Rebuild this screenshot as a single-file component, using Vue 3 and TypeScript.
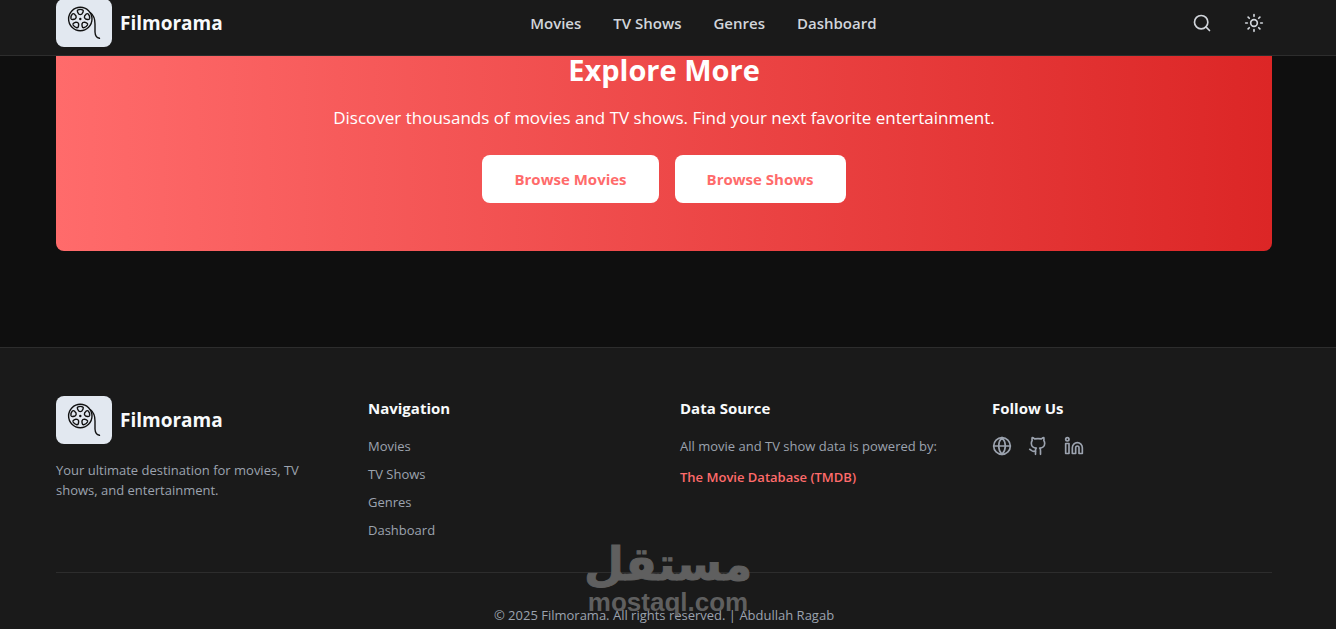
<script setup lang="ts">
interface NavItem {
  label: string
  href: string
}

const navItems: NavItem[] = [
  { label: 'Movies', href: '#movies' },
  { label: 'TV Shows', href: '#tv-shows' },
  { label: 'Genres', href: '#genres' },
  { label: 'Dashboard', href: '#dashboard' },
]

// Angles, in degrees, of the five openings round the film reel.
const reelAngles = [0, 72, 144, 216, 288]
</script>

<template>
  <div class="page">
    <header class="topbar">
      <div class="container topbar-inner">
        <a class="brand" href="#home">
          <svg class="logo" viewBox="0 0 56 48" aria-hidden="true">
            <rect width="56" height="48" fill="#e2e8f0" />
            <g fill="none" stroke="#111" stroke-width="1.4" stroke-linecap="round" stroke-linejoin="round">
              <circle cx="24.3" cy="20" r="11.7" />
              <path
                v-for="angle in reelAngles"
                :key="angle"
                :transform="`rotate(${angle} 24.3 20)`"
                d="M22 10.900Q24.300 9.800 26.600 10.900Q27.800 11.600 27 13.200L25.900 15Q24.300 16.200 22.700 15L21.600 13.200Q20.800 11.600 22 10.900Z"
              />
              <path d="M34.500 13.800C38 16.500 39 20 39 25V33C39.200 37 40.500 38.800 43.500 39.300" />
            </g>
            <circle cx="24.3" cy="20" r="1.2" fill="#111" />
          </svg>
          <span class="brand-name">Filmorama</span>
        </a>
        <nav class="main-nav" aria-label="Main">
          <a v-for="item in navItems" :key="item.label" :href="item.href">{{ item.label }}</a>
        </nav>
        <div class="actions">
          <button type="button" aria-label="Search">
            <svg class="icon" viewBox="0 0 24 24"><circle cx="11" cy="11" r="8" /><path d="m21 21-4.300-4.300" /></svg>
          </button>
          <button type="button" aria-label="Toggle theme">
            <svg class="icon" viewBox="0 0 24 24">
              <circle cx="12" cy="12" r="4" />
              <path d="M12 2v2M12 20v2M4.930 4.930l1.410 1.410M17.660 17.660l1.410 1.410M2 12h2M20 12h2M6.340 17.660l-1.410 1.410M19.070 4.930l-1.410 1.410" />
            </svg>
          </button>
        </div>
      </div>
    </header>

    <main class="container">
      <section class="hero">
        <h2>Explore More</h2>
        <p>Discover thousands of movies and TV shows. Find your next favorite entertainment.</p>
        <div class="hero-actions">
          <a href="#movies">Browse Movies</a>
          <a href="#tv-shows">Browse Shows</a>
        </div>
      </section>
    </main>

    <footer class="footer">
      <div class="container">
        <div class="columns">
          <section>
            <a class="brand" href="#home">
              <svg class="logo" viewBox="0 0 56 48" aria-hidden="true">
                <rect width="56" height="48" fill="#e2e8f0" />
                <g fill="none" stroke="#111" stroke-width="1.4" stroke-linecap="round" stroke-linejoin="round">
                  <circle cx="24.3" cy="20" r="11.7" />
                  <path
                    v-for="angle in reelAngles"
                    :key="angle"
                    :transform="`rotate(${angle} 24.3 20)`"
                    d="M22 10.900Q24.300 9.800 26.600 10.900Q27.800 11.600 27 13.200L25.900 15Q24.300 16.200 22.700 15L21.600 13.200Q20.800 11.600 22 10.900Z"
                  />
                  <path d="M34.500 13.800C38 16.500 39 20 39 25V33C39.200 37 40.500 38.800 43.500 39.300" />
                </g>
                <circle cx="24.3" cy="20" r="1.2" fill="#111" />
              </svg>
              <span class="brand-name">Filmorama</span>
            </a>
            <p class="tagline">Your ultimate destination for movies, TV shows, and entertainment.</p>
          </section>
          <section>
            <h3>Navigation</h3>
            <ul class="links">
              <li v-for="item in navItems" :key="item.label"><a :href="item.href">{{ item.label }}</a></li>
            </ul>
          </section>
          <section>
            <h3>Data Source</h3>
            <p>All movie and TV show data is powered by:</p>
            <a class="source" href="#tmdb">The Movie Database (TMDB)</a>
          </section>
          <section>
            <h3>Follow Us</h3>
            <div class="social">
              <a href="#website" aria-label="Website">
                <svg class="icon" viewBox="0 0 24 24"><circle cx="12" cy="12" r="10" /><path d="M12 2a14.500 14.500 0 0 0 0 20 14.500 14.500 0 0 0 0-20M2 12h20" /></svg>
              </a>
              <a href="#github" aria-label="GitHub">
                <svg class="icon" viewBox="0 0 24 24"><path d="M15 22v-4a4.800 4.800 0 0 0-1-3.500c3 0 6-2 6-5.500.08-1.250-.27-2.480-1-3.500.28-1.150.28-2.350 0-3.500 0 0-1 0-3 1.500-2.640-.5-5.360-.5-8 0C6 2 5 2 5 2c-.3 1.150-.3 2.350 0 3.500A5.403 5.403 0 0 0 4 9c0 3.500 3 5.500 6 5.500-.39.49-.68 1.050-.85 1.650-.17.6-.22 1.230-.15 1.850v4" /><path d="M9 18c-4.510 2-5-2-7-2" /></svg>
              </a>
              <a href="#linkedin" aria-label="LinkedIn">
                <svg class="icon" viewBox="0 0 24 24"><path d="M16 8a6 6 0 0 1 6 6v7h-4v-7a2 2 0 0 0-2-2 2 2 0 0 0-2 2v7h-4v-7a6 6 0 0 1 6-6z" /><rect width="4" height="12" x="2" y="9" /><circle cx="4" cy="4" r="2" /></svg>
              </a>
            </div>
          </section>
        </div>
        <p class="legal">© 2025 Filmorama. All rights reserved. | Abdullah Ragab</p>
      </div>
    </footer>

    <div class="watermark">
      <span class="wm-arabic" lang="ar" dir="rtl">مستقل</span>
      <span class="wm-latin">mostaql.com</span>
    </div>
  </div>
</template>

<style>
body {
  margin: 0;
  background: #0f0f0f;
}
</style>

<style scoped>
.page {
  position: relative;
  min-height: 100vh;
  display: flex;
  flex-direction: column;
  font-family: "Segoe UI", "Open Sans", "Noto Sans", sans-serif;
  font-size: 13px;
  line-height: 20px;
  color: #9ca3af;
  overflow: hidden;
}
h2, h3, p, ul {
  margin: 0;
  padding: 0;
}
a {
  color: inherit;
  text-decoration: none;
}
.container {
  box-sizing: border-box;
  width: calc(100% - 8px);
  max-width: 1328px;
  margin-right: auto;
  padding: 0 56px;
}
.topbar,
.footer {
  background: #1a1a1a;
}
.topbar {
  border-bottom: 1px solid #2d2d2d;
}
.topbar-inner {
  height: 55px;
  padding-bottom: 8px;
  display: flex;
  justify-content: space-between;
  align-items: flex-end;
}
.brand {
  display: flex;
  align-items: center;
  gap: 8px;
}
.logo {
  width: 56px;
  height: 48px;
  border-radius: 8px;
}
.brand-name {
  font-size: 19px;
  line-height: 28px;
  font-weight: 700;
  color: #f8fafc;
}
.main-nav {
  display: flex;
  align-items: center;
  gap: 32px;
  height: 48px;
  font-size: 15px;
  font-weight: 600;
  color: #d1d5db;
}
.actions {
  display: flex;
  align-items: center;
  gap: 16px;
  height: 48px;
  color: #d1d5db;
}
.actions button {
  display: flex;
  padding: 8px;
  border: 0;
  background: none;
  color: inherit;
}
.icon {
  display: block;
  width: 20px;
  height: 20px;
  fill: none;
  stroke: currentColor;
  stroke-width: 2;
  stroke-linecap: round;
  stroke-linejoin: round;
}
.hero {
  padding-bottom: 48px;
  border-radius: 0 0 8px 8px;
  background: linear-gradient(to right, #ff6b6b, #dc2626);
  color: #fff;
  text-align: center;
}
.hero h2 {
  font-size: 29px;
  line-height: 28px;
  font-weight: 700;
}
.hero p {
  margin-top: 20px;
  font-size: 17px;
  line-height: 27px;
}
.hero-actions {
  display: flex;
  justify-content: center;
  gap: 16px;
  margin-top: 24px;
}
.hero-actions a {
  padding: 12px 32px;
  border-radius: 8px;
  background: #fff;
  color: #ff6b6b;
  font-size: 15px;
  line-height: 24px;
  font-weight: 700;
}
.footer {
  flex: 1;
  margin-top: 96px;
  border-top: 1px solid #2d2d2d;
  padding-top: 48px;
}
.columns {
  display: grid;
  grid-template-columns: repeat(4, 1fr);
  gap: 32px;
}
.tagline {
  margin-top: 16px;
}
h3 {
  margin-bottom: 16px;
  font-size: 15px;
  line-height: 24px;
  font-weight: 700;
  color: #f8fafc;
}
.links {
  display: grid;
  gap: 8px;
  list-style: none;
}
.source {
  display: block;
  margin-top: 11px;
  font-weight: 600;
  color: #ff6b6b;
}
.social {
  display: flex;
  gap: 16px;
}
.legal {
  margin-top: 32px;
  border-top: 1px solid #2d2d2d;
  padding-top: 32px;
  text-align: center;
}
.watermark {
  position: absolute;
  left: 50%;
  bottom: 12px;
  display: grid;
  justify-items: center;
  transform: translateX(-50%);
  color: #5f5f5f;
  font-weight: 700;
  pointer-events: none;
}
.wm-arabic {
  font-family: "DejaVu Sans", sans-serif;
  font-size: 46px;
  line-height: 46px;
  -webkit-text-stroke: 1px #5f5f5f;
}
.wm-latin {
  font-family: "Liberation Sans", Arial, sans-serif;
  font-size: 26px;
  line-height: 30px;
}
</style>
